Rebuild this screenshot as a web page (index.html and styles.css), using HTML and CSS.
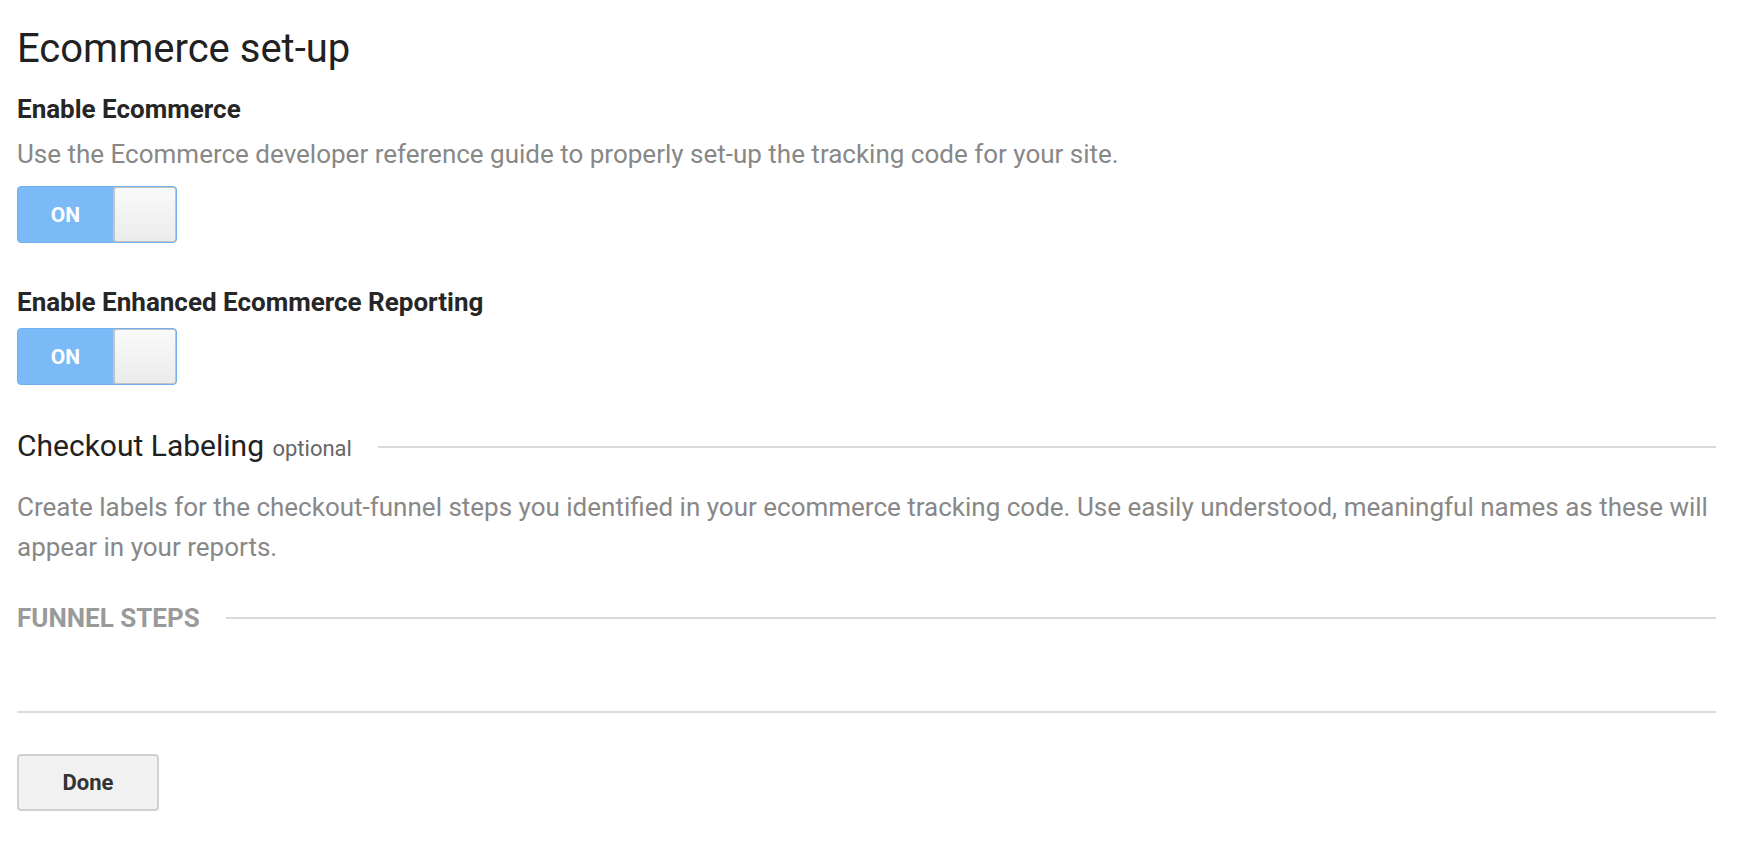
FILE: index.html
```html
<!DOCTYPE html>
<html lang="en">
<head>
<meta charset="utf-8">
<title>Ecommerce set-up</title>
<link rel="stylesheet" href="styles.css">
</head>
<body>
<main class="page">
  <h1 class="title">Ecommerce set-up</h1>

  <h2 class="label label-first">Enable Ecommerce</h2>
  <p class="desc desc-first">Use the Ecommerce developer reference guide to properly set-up the tracking code for your site.</p>
  <div class="toggle toggle-first">
    <span class="toggle-on">ON</span>
    <span class="toggle-knob"></span>
  </div>

  <h2 class="label label-second">Enable Enhanced Ecommerce Reporting</h2>
  <div class="toggle toggle-second">
    <span class="toggle-on">ON</span>
    <span class="toggle-knob"></span>
  </div>

  <div class="section-head">
    <h3 class="section-title">Checkout Labeling <span class="optional">optional</span></h3>
    <span class="rule"></span>
  </div>
  <p class="desc desc-second">Create labels for the checkout-funnel steps you identified in your ecommerce tracking code. Use easily understood, meaningful names as these will appear in your reports.</p>

  <div class="funnel-head">
    <h4 class="funnel-title">FUNNEL STEPS</h4>
    <span class="rule"></span>
  </div>

  <hr class="separator">

  <button class="done" type="button">Done</button>
</main>
</body>
</html>
```

FILE: styles.css
```css
html, body {
  margin: 0;
  padding: 0;
  background: #ffffff;
}

body {
  font-family: Roboto, "Liberation Sans", Arial, sans-serif;
  color: #222222;
}

.page {
  padding: 25px 26px 40px 17px;
}

.title {
  margin: 0;
  font-size: 40px;
  line-height: 48px;
  font-weight: 400;
  color: #212121;
}

.label {
  margin: 0;
  font-size: 26px;
  line-height: 32px;
  font-weight: 700;
  color: #262626;
}

.label-first {
  margin-top: 20px;
}

.label-second {
  margin-top: 43px;
}

.desc {
  margin: 0;
  font-size: 26px;
  line-height: 40px;
  font-weight: 400;
  color: #888888;
}

.desc-first {
  margin-top: 9px;
}

.desc-second {
  margin-top: 20px;
}

.toggle {
  display: flex;
  width: 160px;
  height: 57px;
  box-sizing: border-box;
  border-radius: 4px;
  overflow: hidden;
  background: #7cbaf7;
  border: 1px solid #72b1ef;
}

.toggle-first {
  margin-top: 12px;
}

.toggle-second {
  margin-top: 10px;
}

.toggle-on {
  flex: 0 0 95px;
  display: flex;
  align-items: center;
  justify-content: center;
  color: #ffffff;
  font-size: 21px;
  font-weight: 700;
}

.toggle-knob {
  flex: 1;
  box-sizing: border-box;
  border: 2px solid #c4c4c4;
  border-radius: 4px;
  background: linear-gradient(#fafafa, #ebebeb);
  margin: -1px -1px -1px 0;
}

.section-head,
.funnel-head {
  display: flex;
  align-items: center;
}

.section-head {
  margin-top: 42px;
  height: 40px;
}

.section-title {
  margin: 0;
  font-size: 30px;
  line-height: 40px;
  font-weight: 400;
  color: #212121;
  white-space: nowrap;
}

.optional {
  font-size: 22px;
  color: #666666;
  margin-left: 1px;
}

.rule {
  flex: 1;
  height: 2px;
  background: #dadada;
}

.section-head .rule {
  margin-left: 26px;
}

.funnel-head {
  margin-top: 35px;
  height: 32px;
}

.funnel-title {
  margin: 0;
  font-size: 26px;
  line-height: 32px;
  font-weight: 700;
  color: #9a9a9a;
  white-space: nowrap;
}

.funnel-head .rule {
  margin-left: 26px;
}

.separator {
  margin: 77px 0 0;
  border: 0;
  height: 2px;
  background: #dadada;
}

.done {
  display: block;
  margin-top: 41px;
  width: 142px;
  height: 57px;
  box-sizing: border-box;
  border: 2px solid #d0d0d0;
  border-radius: 4px;
  background: #f1f1f1;
  font-family: Roboto, "Liberation Sans", Arial, sans-serif;
  font-size: 22px;
  font-weight: 700;
  color: #333333;
  padding: 0;
}
```
